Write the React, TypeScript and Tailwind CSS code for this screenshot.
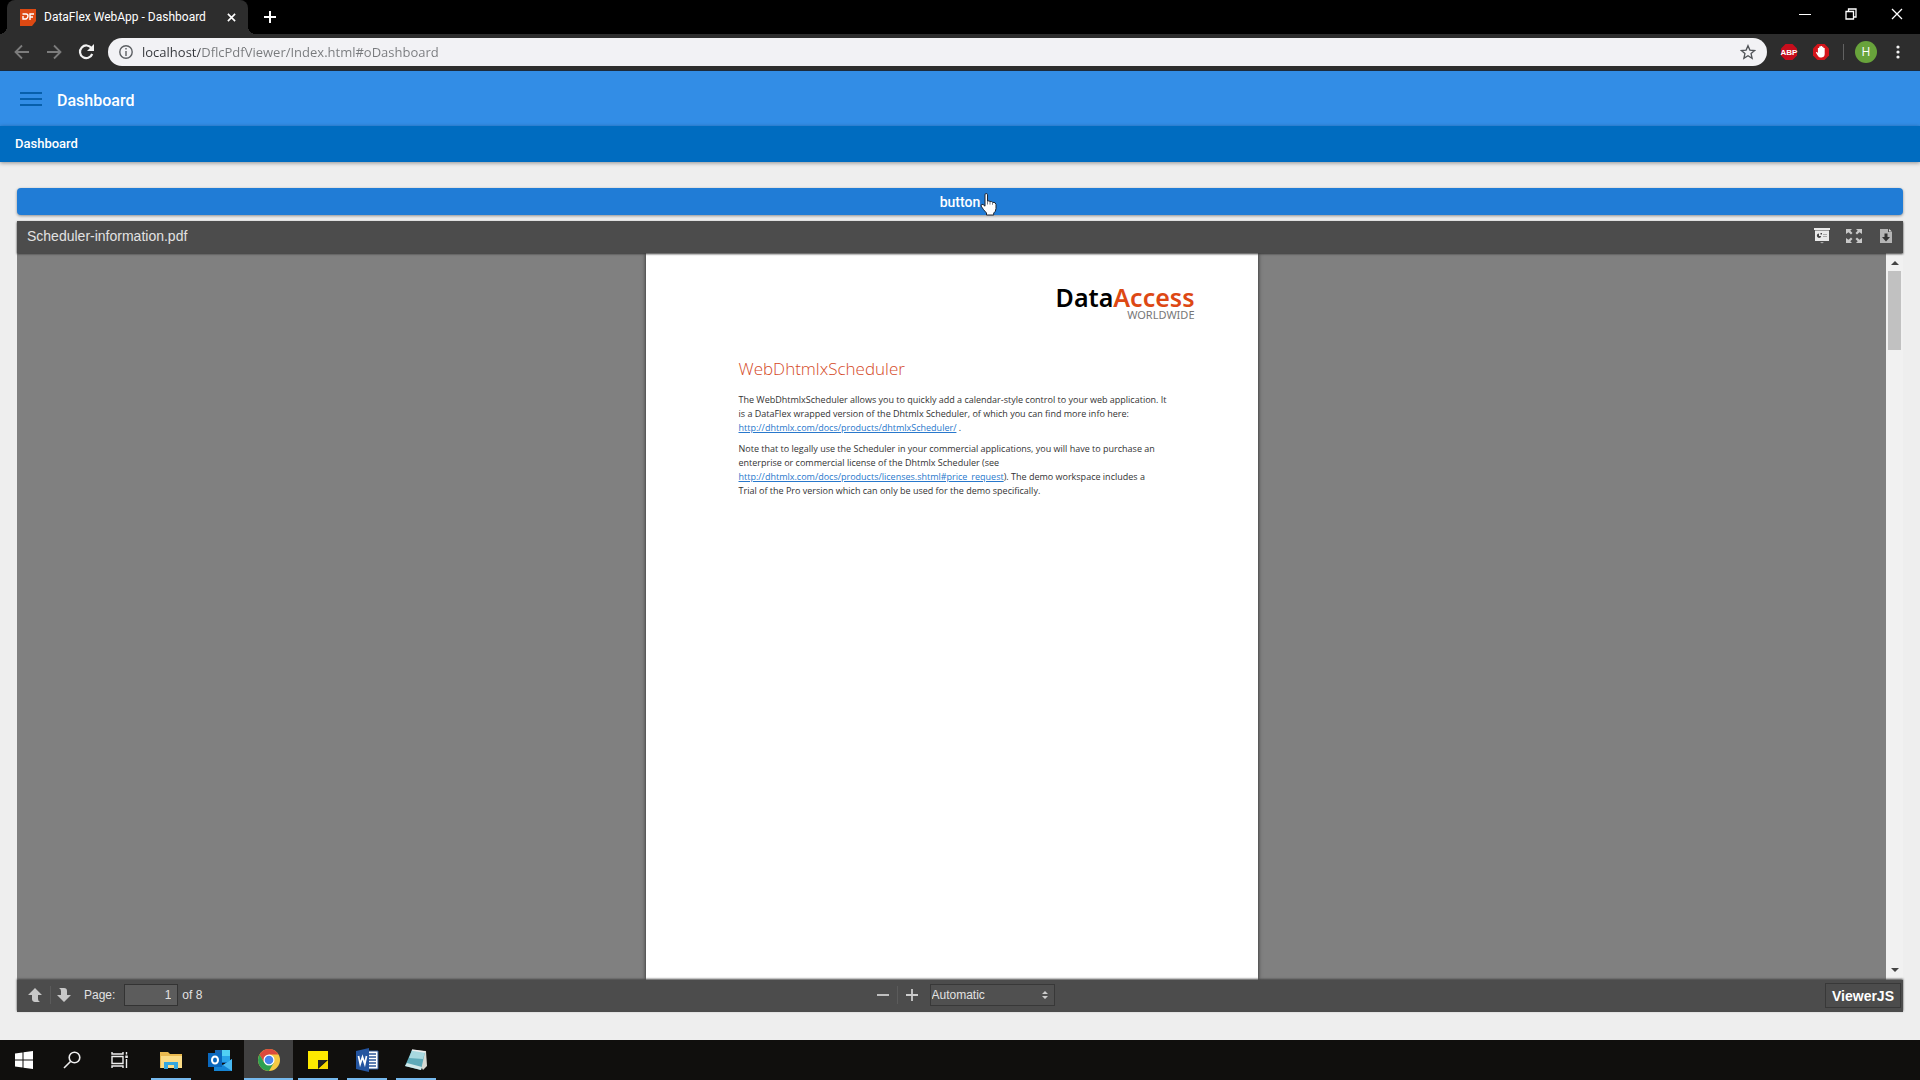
import React from "react";

const segoe = "font-['Open_Sans',sans-serif]";
const arial = "font-['Liberation_Sans',sans-serif]";

function BrowserTabs() {
  return (
    <div className="flex h-[34px] items-start bg-black font-[Roboto,sans-serif]">
      <div className="relative ml-[7px] flex h-[34px] w-[241px] items-center rounded-t-lg bg-[#2d2d2d] pl-3">
        <span className="absolute -left-2 bottom-0 h-2 w-2 bg-[radial-gradient(circle_at_0_0,#000_8px,#2d2d2d_8px)]" />
        <span className="absolute -right-2 bottom-0 h-2 w-2 bg-[radial-gradient(circle_at_100%_0,#000_8px,#2d2d2d_8px)]" />
        <svg viewBox="0 0 17 17" className="h-[17px] w-[17px]" aria-hidden="true">
          <path d="M1 0h16v12l-4 5H1z" fill="#dd4912" />
          <path d="M3.5 5H7q2 0 2 2t-2 3H4V7M15 5h-4v6M11 8h3" fill="none" stroke="#fff" strokeWidth="1.4" />
        </svg>
        <span className="ml-2 whitespace-nowrap text-xs text-white">DataFlex WebApp - Dashboard</span>
        <button aria-label="Close tab" className="ml-auto mr-[9px] flex h-4 w-4 items-center justify-center">
          <svg viewBox="0 0 10 10" className="h-[9px] w-[9px]" stroke="#fff" strokeWidth="1.8"><path d="M1 1l8 8M9 1l-8 8" /></svg>
        </button>
      </div>
      <button aria-label="New tab" className="ml-[14px] flex h-[34px] w-4 items-center justify-center">
        <svg viewBox="0 0 12 12" className="h-3 w-3" stroke="#fff" strokeWidth="2"><path d="M6 0v12M0 6h12" /></svg>
      </button>
      <div className="ml-auto flex h-7 items-center gap-[34px] pr-[17px]">
        <button aria-label="Minimize">
          <svg viewBox="0 0 12 12" className="h-3 w-3" stroke="#fff" strokeWidth="1"><path d="M0 6.5h12" /></svg>
        </button>
        <button aria-label="Restore">
          <svg viewBox="0 0 12 12" className="h-3 w-3" fill="none" stroke="#fff" strokeWidth="1.3"><path d="M1 3.5h7.5V11H1zM3.5 3.5V1H11v8H8.5" /></svg>
        </button>
        <button aria-label="Close">
          <svg viewBox="0 0 12 12" className="h-3 w-3" stroke="#fff" strokeWidth="1.3"><path d="M1 1l10 10M11 1L1 11" /></svg>
        </button>
      </div>
    </div>
  );
}

function BrowserToolbar() {
  return (
    <div className={`flex h-[37px] items-center border-b border-[#1b2b3d] bg-[#2d2d2d] ${segoe}`}>
      <button aria-label="Back" className="ml-[14px]">
        <svg viewBox="0 0 16 16" className="h-4 w-4" fill="none" stroke="#7c7c7c" strokeWidth="1.8"><path d="M15 8H2M8 1.5L1.5 8 8 14.5" /></svg>
      </button>
      <button aria-label="Forward" className="ml-4">
        <svg viewBox="0 0 16 16" className="h-4 w-4" fill="none" stroke="#7c7c7c" strokeWidth="1.8"><path d="M1 8h13M8 1.5L14.500 8 8 14.500" /></svg>
      </button>
      <button aria-label="Reload" className="ml-4">
        <svg viewBox="0 0 16 16" className="h-4 w-4" fill="none" stroke="#f2f2f2" strokeWidth="2.2"><path d="M13.5 4.2A6.3 6.3 0 1 0 14.2 10" /><path d="M16 0v7H9z" fill="#f2f2f2" stroke="none" /></svg>
      </button>
      <label className="ml-[14px] flex h-7 flex-1 items-center rounded-full bg-[#f2f2f5] pl-[11px] pr-[11px]">
        <svg viewBox="0 0 14 14" className="h-[14px] w-[14px]" fill="none" stroke="#5c5f63" strokeWidth="1.4"><circle cx="7" cy="7" r="6.2" /><path d="M7 6v5M7 3v1.6" /></svg>
        <input
          aria-label="Address"
          defaultValue="localhost/DflcPdfViewer/Index.html#oDashboard"
          className="ml-[9px] min-w-0 flex-1 bg-[linear-gradient(90deg,#33353a_58px,#77797c_58px)] bg-clip-text text-[13px] leading-5 text-transparent outline-none"
        />
        <svg viewBox="0 0 24 24" className="h-4 w-4" fill="none" stroke="#505357" strokeWidth="2"><path d="M12 2.5l2.8 6.6 7.2.6-5.4 4.7 1.6 7L12 17.7l-6.2 3.7 1.6-7L2 9.7l7.2-.6z" /></svg>
      </label>
      <button aria-label="Adblock Plus" className="ml-[13px]">
        <svg viewBox="0 0 18 18" className="h-[18px] w-[18px]">
          <path d="M5.5 1h7L17 5.500v7L12.500 17h-7L1 12.500v-7z" fill="#c70d1c" />
          <text x="9" y="12" textAnchor="middle" fontSize="8" fontWeight="700" fill="#fff" fontFamily="Liberation Sans">ABP</text>
        </svg>
      </button>
      <button aria-label="AdBlock" className="ml-[14px]">
        <svg viewBox="0 0 18 18" className="h-[18px] w-[18px]">
          <path d="M5.500 1h7L17 5.500v7L12.500 17h-7L1 12.500v-7z" fill="#d4141a" />
          <path d="M6 13L3.800 9.400q.8-1 2.100.6V5h1.300V3.500h1.400V3H10v.8h1.400V5h1.300v6q0 3-3 3.500H8q-1.200-.3-2-1.500z" fill="#fff" />
        </svg>
      </button>
      <span className="ml-[13px] h-4 w-px bg-[#626262]" />
      <button aria-label="Profile" className="ml-[11px] flex h-[22px] w-[22px] items-center justify-center rounded-full bg-[#68a33b] text-xs text-white">H</button>
      <button aria-label="Menu" className="ml-[13px] mr-[15px] flex h-4 w-[15px] items-center justify-center">
        <svg viewBox="0 0 4 14" className="h-[14px] w-1" fill="#f2f2f2"><circle cx="2" cy="2" r="1.600" /><circle cx="2" cy="7" r="1.600" /><circle cx="2" cy="12" r="1.600" /></svg>
      </button>
    </div>
  );
}

function HandCursor() {
  return (
    <svg viewBox="0 0 17 23" className="pointer-events-none absolute left-full top-1 h-[23px] w-[17px]" aria-hidden="true">
      <path d="M5 1.800q0-1.300 1.200-1.300T7.500 1.800V8q1.800-.6 2.500.6 1.700-.4 2.500.7 3.300-.4 3.500 2.200v4q-.3 3.500-2.300 4.500v2H6.500v-2Q3.500 17 1 13q0-2 2-1.600l2 1.800z" fill="#fff" stroke="#1c2430" />
      <path d="M7.500 8v3.500M10 8.600v3M12.500 9.300v2.500" stroke="#555f6c" strokeWidth=".8" />
    </svg>
  );
}

function DocumentPage() {
  return (
    <article className="w-[612px] bg-white pl-[93px] pr-[63px] pt-8 shadow-[0_0_4px_#222]">
      <header className="flex flex-col items-end font-['Noto_Sans',sans-serif]">
        <div className="text-[25px] font-semibold leading-6 text-black">Data<span className="text-[#dd4814]">Access</span></div>
        <div className="text-[11px] leading-3 text-[#777]">WORLDWIDE</div>
      </header>
      <div className="whitespace-nowrap font-['Open_Sans',sans-serif] text-[9px] leading-[14px] text-[#333]">
        <h1 className="mt-[36px] text-[17px] font-light leading-6 text-[#d4491f]">WebDhtmlxScheduler</h1>
        <p className="mt-3">
          The WebDhtmlxScheduler allows you to quickly add a calendar-style control to your web application. It<br />
          is a DataFlex wrapped version of the Dhtmlx Scheduler, of which you can find more info here:<br />
          <a href="#scheduler" className="text-[#2878cc] underline">http://dhtmlx.com/docs/products/dhtmlxScheduler/</a> .
        </p>
        <p className="mt-[7px]">
          Note that to legally use the Scheduler in your commercial applications, you will have to purchase an<br />
          enterprise or commercial license of the Dhtmlx Scheduler (see<br />
          <a href="#license" className="text-[#2878cc] underline">http://dhtmlx.com/docs/products/licenses.shtml#price_request</a>). The demo workspace includes a<br />
          Trial of the Pro version which can only be used for the demo specifically.
        </p>
      </div>
    </article>
  );
}

function Viewer() {
  return (
    <section className={`mt-[6px] flex flex-1 flex-col bg-[#808080] text-[#e2e2e2] ${arial}`}>
      <div className="z-10 flex h-8 items-center bg-[#4c4c4c] pb-[2px] pl-[10px] pr-[9px] shadow-[0_1px_2px_#333]">
        <h2 className="text-sm leading-4">Scheduler-information.pdf</h2>
        <div className="ml-auto flex items-center gap-4">
          <button aria-label="Presentation">
            <svg viewBox="0 0 16 16" className="h-4 w-4"><path d="M0 0h16v2h-1v11H1V2H0z" fill="#e9e9e9" /><path d="M1 2.500h14" stroke="#999" /><path d="M6 14h4l-2 1.500z" fill="#aaa" /><path d="M5 5.500A2.200 2.200 0 1 0 7.200 8H5z" fill="#444" /><path d="M6.500 5h1.500v1.500H6.500z" fill="#444" /><path d="M9 6.500h4M9 8.500h4" stroke="#aaa" /></svg>
          </button>
          <button aria-label="Fullscreen">
            <svg viewBox="0 0 16 16" className="h-4 w-4" fill="#c8c8c8"><path d="M0 1h6L4.300 2.700 6.500 5 5 6.500 2.500 4.200 0 6zM16 1h-6l1.700 1.700L9.500 5 11 6.500l2.500-2.300L16 6zM0 15h6l-1.700-1.700L6.500 11 5 9.500l-2.500 2.300L0 10zM16 15h-6l1.700-1.700L9.500 11 11 9.500l2.500 2.300L16 10z" /></svg>
          </button>
          <button aria-label="Download">
            <svg viewBox="0 0 16 16" className="h-4 w-4"><path d="M2 1h8v3h4v11H2z" fill="#b5b5b5" /><path d="M11 1l3 2.500h-3z" fill="#ddd" /><path d="M6.500 5.500h3V9H12l-4 4.500L4 9h2.500z" fill="#333" /></svg>
          </button>
        </div>
      </div>
      <div className="flex flex-1">
        <div className="flex flex-1 justify-center"><DocumentPage /></div>
        <div className="flex w-[17px] flex-col items-center bg-[#f1f1f1] py-1" aria-label="Document scroll position">
          <svg viewBox="0 0 8 4" className="mt-1 h-1 w-2"><path d="M4 0l4 4H0z" fill="#444" /></svg>
          <div className="mt-[6px] h-[79px] w-[13px] bg-[#c1c1c1]" />
          <svg viewBox="0 0 8 4" className="mb-1 mt-auto h-1 w-2"><path d="M4 4l4-4H0z" fill="#444" /></svg>
        </div>
      </div>
      <div className="z-10 grid h-8 grid-cols-[1fr_auto_1fr] items-center bg-[#4c4c4c] pb-[2px] text-xs shadow-[0_-1px_2px_#444]">
        <div className="flex items-center">
          <button aria-label="Previous page" className="ml-[11px]">
            <svg viewBox="0 0 14 14" className="h-[14px] w-[14px]" fill="#c8c8c8"><path d="M7 0l7 7h-4v4q0 2 2 3H7q-3-.5-3-3V7H0z" /></svg>
          </button>
          <span className="ml-2 h-[18px] w-px bg-[#5b5b5b]" />
          <button aria-label="Next page" className="ml-[6px]">
            <svg viewBox="0 0 14 14" className="h-[14px] w-[14px]" fill="#c8c8c8"><path d="M7 14l7-7h-4V3q0-3-3-3H2q2 1 2 3v4H0z" /></svg>
          </button>
          <label htmlFor="page" className="ml-[13px]">Page:</label>
          <input id="page" defaultValue="1" className="ml-[9px] h-[22px] w-[54px] border border-[#333] bg-[#5c5c5c] px-[6px] text-right text-xs outline-none" />
          <span className="ml-1">of 8</span>
        </div>
        <div className="flex items-center pl-[11px]">
          <button aria-label="Zoom out" className="flex w-3 justify-center"><svg viewBox="0 0 12 12" className="h-3 w-3" stroke="#ccc" strokeWidth="1.800"><path d="M0 6h12" /></svg></button>
          <span className="ml-2 h-[18px] w-px bg-[#5b5b5b]" />
          <button aria-label="Zoom in" className="ml-2 flex w-3 justify-center"><svg viewBox="0 0 12 12" className="h-3 w-3" stroke="#ccc" strokeWidth="1.800"><path d="M0 6h12M6 0v12" /></svg></button>
          <div className="relative ml-3">
            <select aria-label="Zoom" className="block h-[22px] w-[125px] appearance-none border border-[#383838] bg-[#505050] pl-px text-xs outline-none"><option>Automatic</option></select>
            <svg viewBox="0 0 6 8" className="pointer-events-none absolute right-[7px] top-[7px] h-2 w-[6px]" fill="#ccc"><path d="M3 0l3 3H0zM3 8l3-3H0z" /></svg>
          </div>
        </div>
        <button className="mr-[2px] h-[25px] justify-self-end border border-[#383838] px-[6px] pt-[2px] text-sm font-bold leading-4 text-white">ViewerJS</button>
      </div>
    </section>
  );
}

function TaskItem({ label, open, active, children }: { label: string; open?: boolean; active?: boolean; children: React.ReactNode }) {
  return (
    <button aria-label={label} className={active ? "flex h-10 w-[49px] flex-col items-center bg-[#404040]" : open ? "flex h-10 w-[49px] flex-col items-center" : "flex h-10 w-12 flex-col items-center"}>
      <span className="flex flex-1 items-center pt-px">{children}</span>
      <span className={active ? "h-[2px] w-full bg-[#76b9ed]" : open ? "h-[2px] w-10 bg-[#76b9ed]" : "h-[2px]"} />
    </button>
  );
}

function Taskbar() {
  return (
    <footer className="flex h-10 gap-[2px] bg-[#100f0d]">
      <div className="flex">
        <TaskItem label="Start"><svg viewBox="0 0 18 18" className="h-[18px] w-[18px]" fill="#fff"><path d="M0 2.500l7.500-1V8.500H0zM8.500 1.300L18 0v8.500H8.500zM0 9.500h7.500v7L0 15.500zM8.500 9.500H18V18l-9.500-1.300z" /></svg></TaskItem>
        <TaskItem label="Search"><svg viewBox="0 0 18 18" className="h-[18px] w-[18px]" fill="none" stroke="#eee" strokeWidth="1.600"><circle cx="11.500" cy="6.500" r="5.300" /><path d="M7.500 10.500L1 17" /></svg></TaskItem>
        <TaskItem label="Task view"><svg viewBox="0 0 18 18" className="h-[18px] w-[18px]" fill="none" stroke="#eee" strokeWidth="1.400"><path d="M1 5.500h11v7H1zM1 1v2h11V1M1 17v-2h11v2M15.500 1v2.500M15.500 8v9" /><path d="M14.300 4.500h2.500V7h-2.500z" fill="#eee" stroke="none" /></svg></TaskItem>
      </div>
      <div className="flex">
        <TaskItem label="File Explorer" open><svg viewBox="0 0 24 20" className="h-5 w-6"><path d="M1 2h8l2 2h12v14H1z" fill="#e9b94f" /><path d="M2 6h21v12H2z" fill="#fbdc86" /><path d="M5 19v-7h14v7h-4v-4H9v4z" fill="#35a7df" /></svg></TaskItem>
        <div className="w-[49px] pl-px">
          <TaskItem label="Outlook"><svg viewBox="0 0 24 22" className="h-[22px] w-6"><path d="M7 1h15v13H7z" fill="#1767b3" /><path d="M14 1h8v6h-8z" fill="#50d0f4" /><path d="M7 7h7v6H7z" fill="#0c579e" /><path d="M14 7h8v6h-8z" fill="#28a3e8" /><path d="M6 11l9 5 9-6v12H6z" fill="#1585d5" /><path d="M24 10v12L15 16z" fill="#47b8f1" /><path d="M0 4h14v14H0z" fill="#0a68bd" /><ellipse cx="7" cy="11" rx="3" ry="3.600" fill="none" stroke="#fff" strokeWidth="2" /></svg></TaskItem>
        </div>
        <TaskItem label="Chrome" open active><svg viewBox="0 0 24 24" className="h-6 w-6"><circle cx="12" cy="12" r="11" fill="#f5c942" /><path d="M2.500 6.500A11 11 0 0 1 21.500 6.500H12L7.300 14.800z" fill="#dc4a3d" /><path d="M2.500 6.500A11 11 0 0 0 12 23l4.800-8.300-9.500.1z" fill="#2da052" /><circle cx="12" cy="12" r="5.500" fill="#fff" /><circle cx="12" cy="12" r="4.300" fill="#4884ec" /></svg></TaskItem>
        <TaskItem label="Sticky Notes" open><svg viewBox="0 0 20 20" className="h-5 w-5"><path d="M0 1h20v9H10v9H0z" fill="#fde900" /><path d="M10 10h9L10 18z" fill="#222" /><path d="M20 10v9H10z" fill="#f6d900" /></svg></TaskItem>
        <TaskItem label="Word" open><svg viewBox="0 0 24 24" className="h-6 w-6"><path d="M13 3h10v18H13z" fill="#fff" stroke="#2b579a" /><path d="M14 6h7M14 9h7M14 12h7M14 15h7M14 18h7" stroke="#2b579a" strokeWidth="1.300" /><path d="M1 3l13-3v24L1 21z" fill="#2455a0" /><path d="M3.500 8l1.700 8L7.500 9l2.300 7 1.700-8" fill="none" stroke="#fff" strokeWidth="1.700" /></svg></TaskItem>
        <TaskItem label="Notepad" open><svg viewBox="0 0 24 24" className="h-6 w-6"><path d="M8 2l14 1 1 15-4 4z" fill="#d7d9d2" /><path d="M8 2l13 2-4 18L1 18z" fill="#5eaab9" /><path d="M8 2l13 2-2 7-14-1z" fill="#a8d8df" /><path d="M1 18l16 4 1-3L3 15z" fill="#d2e9ea" /><path d="M8 2l13 2" stroke="#eee" strokeWidth="1.500" /></svg></TaskItem>
      </div>
    </footer>
  );
}

export default function App() {
  return (
    <div className="flex min-h-screen flex-col bg-[#eee]">
      <BrowserTabs />
      <BrowserToolbar />
      <div className="flex flex-1 flex-col font-[Roboto,sans-serif]">
        <header className="flex h-[55px] items-center bg-[#328de6] pl-5 text-white">
          <button aria-label="Open menu" className="pt-px"><svg viewBox="0 0 22 16" className="h-4 w-[22px]" stroke="#075fab" strokeWidth="2"><path d="M0 2h22M0 8h22M0 14h22" /></svg></button>
          <h1 className="ml-[15px] pt-1 text-base font-medium leading-5">Dashboard</h1>
        </header>
        <nav className="flex h-9 items-center bg-[#006cc0] pl-[15px] text-[13px] font-medium text-white shadow-[0_1px_4px_#0006]"><a href="#oDashboard">Dashboard</a></nav>
        <main className="flex flex-1 flex-col px-[17px] pb-7 pt-[26px]">
          <button className="flex h-[27px] justify-center rounded-sm bg-[#207cd6] pt-px text-sm font-medium leading-[27px] text-white shadow-[0_1px_3px_#0006]">
            <span className="relative">button<HandCursor /></span>
          </button>
          <Viewer />
        </main>
      </div>
      <Taskbar />
    </div>
  );
}
